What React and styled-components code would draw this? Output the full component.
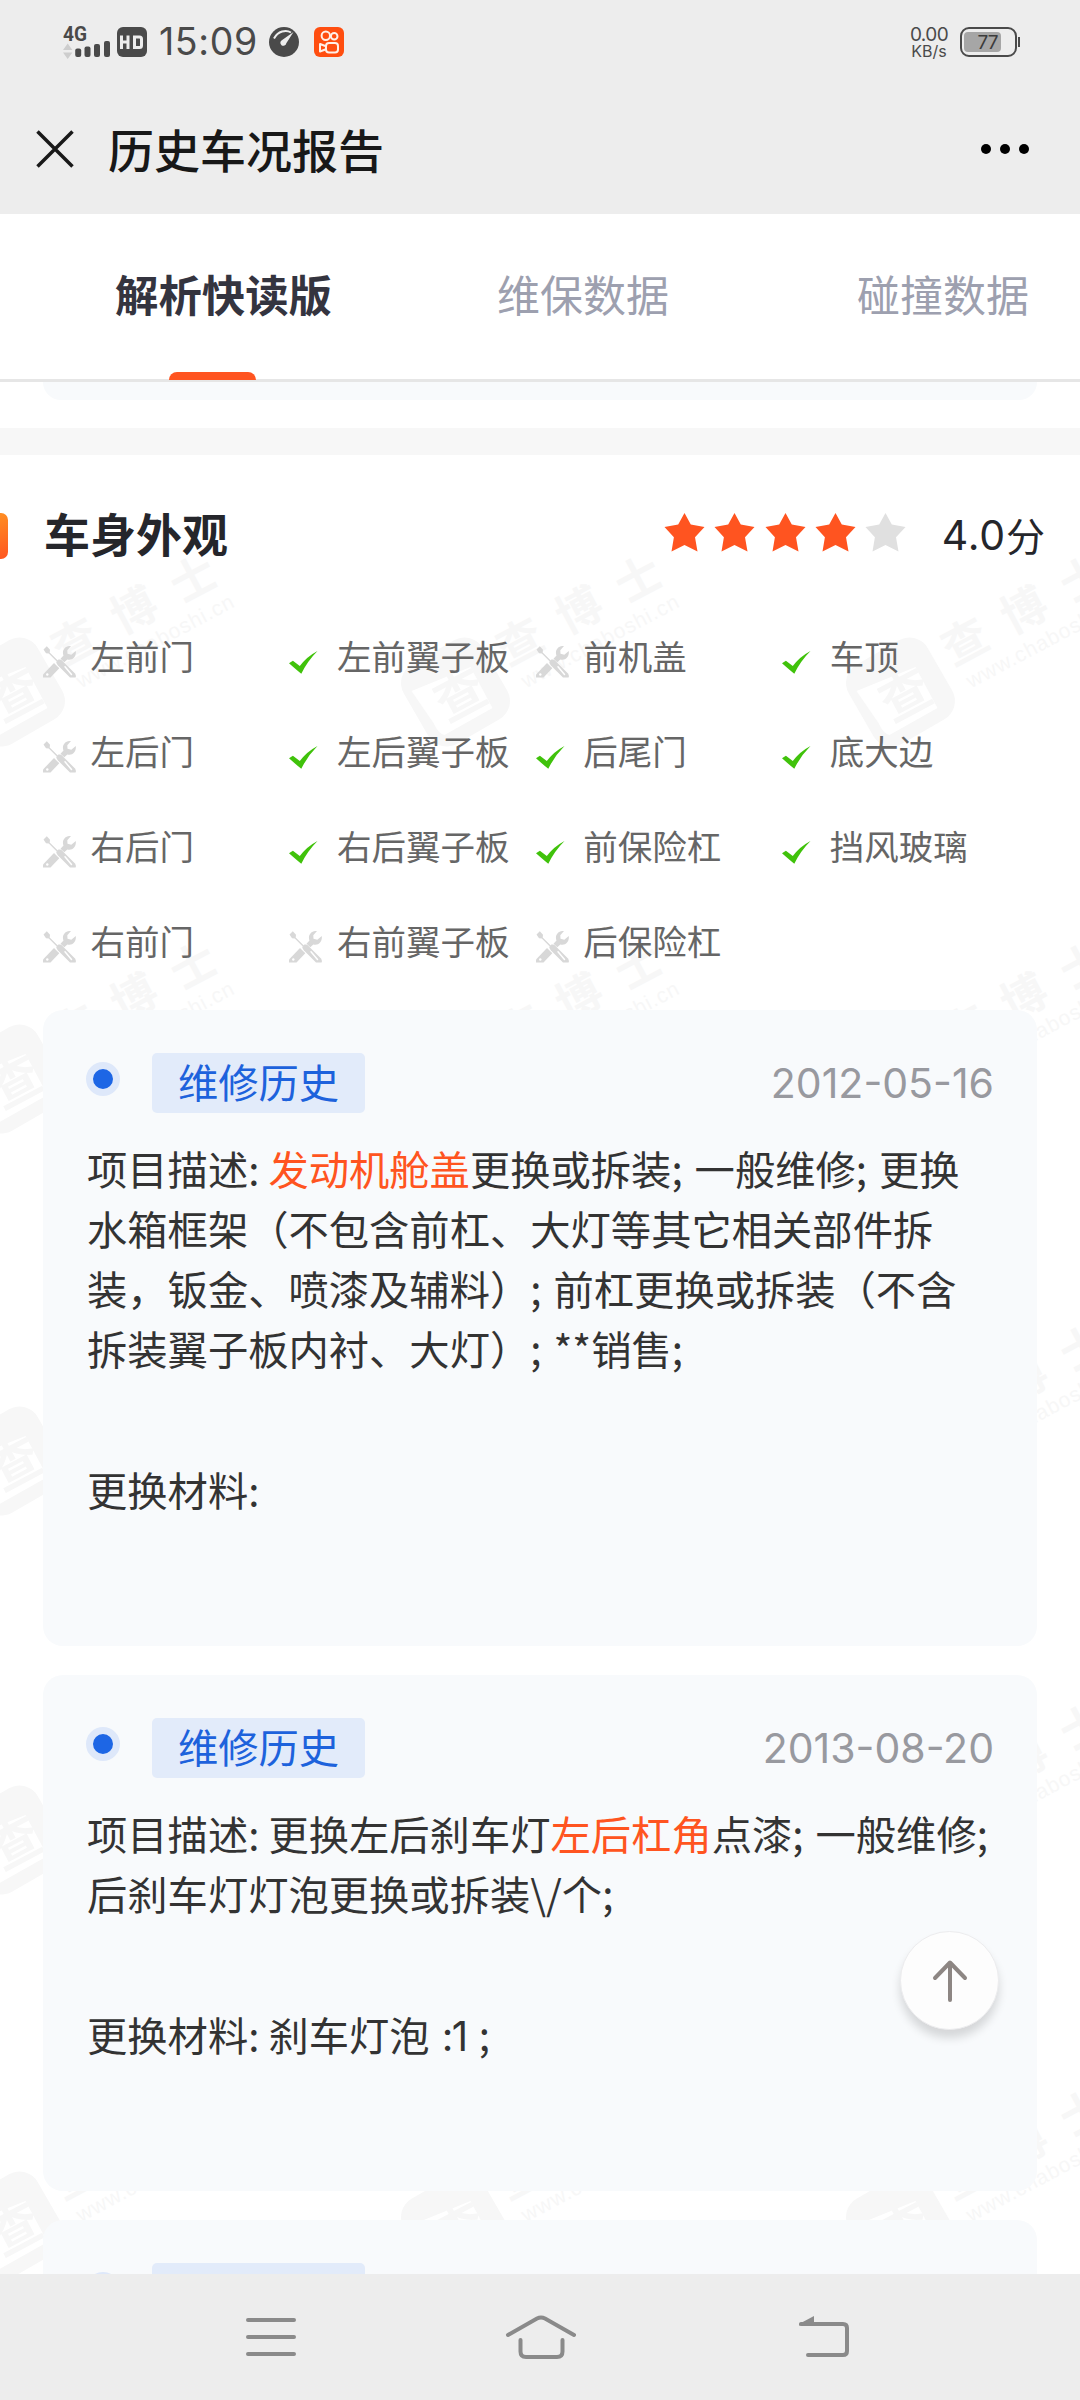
import React from "react";
import styled, { createGlobalStyle } from "styled-components";

const COLORS = {
	bar: "#ededed",
	accent: "#ff5420",
	ink: "#25262b",
	body: "#333333",
	muted: "#9da0af",
	card: "#f8fafc",
	blue: "#1d62dc",
	status: "#4a4a4a",
	nav: "#8a8a8a",
	mark: "#f7f7f7",
};

const CJK = `"Noto Sans CJK SC", sans-serif`;

const PARTS = [
	["左前门", false],
	["左前翼子板", true],
	["前机盖", false],
	["车顶", true],
	["左后门", false],
	["左后翼子板", true],
	["后尾门", true],
	["底大边", true],
	["右后门", false],
	["右后翼子板", true],
	["前保险杠", true],
	["挡风玻璃", true],
	["右前门", false],
	["右前翼子板", false],
	["后保险杠", false],
];

const WATERMARK_ROWS = [237, 624, 1006, 1385, 1771];
const WATERMARK_COLS = [10.5, 455.5, 900.5];

const App = () => {
	return (
		<Screen>
			<GlobalStyle />
			<StatusBar />
			<TitleBar>
				<CloseIcon />
				<Title>历史车况报告</Title>
				<MoreIcon />
			</TitleBar>
			<Tabs>
				<Tab $active>解析快读版</Tab>
				<Tab>维保数据</Tab>
				<Tab>碰撞数据</Tab>
			</Tabs>
			<Content>
				<PreviousCard />
				<Divider />
				<Section>
					<Watermark />
					<SectionBody>
						<SectionHead>
							<Marker />
							<SectionTitle>车身外观</SectionTitle>
							<Stars>
								{[1, 2, 3, 4, 5].map((n) => (
									<Star key={n} filled={n <= 4} />
								))}
							</Stars>
							<Score>
								<Digits>4.0</Digits>分
							</Score>
						</SectionHead>
						<PartGrid>
							{PARTS.map(([name, ok]) => (
								<Part key={name}>
									<PartIcon>{ok ? <CheckIcon /> : <ToolsIcon />}</PartIcon>
									{name}
								</Part>
							))}
						</PartGrid>
						<CardList>
							<HistoryCard date="2012-05-16">
								<Line>
									<Label>项目描述: </Label>
									<Hot>发动机舱盖</Hot>更换或拆装; 一般维修; 更换
								</Line>
								<Line>水箱框架（不包含前杠、大灯等其它相关部件拆</Line>
								<Line>装，钣金、喷漆及辅料）; 前杠更换或拆装（不含</Line>
								<Line>拆装翼子板内衬、大灯）; **销售;</Line>
								<Materials>更换材料:</Materials>
							</HistoryCard>
							<HistoryCard date="2013-08-20">
								<Line>
									<Label>项目描述: </Label>
									更换左后刹车灯<Hot>左后杠角</Hot>点漆; 一般维修;
								</Line>
								<Line>后刹车灯灯泡更换或拆装\/个;</Line>
								<Materials>
									<Label>更换材料: </Label>
									刹车灯泡 <Count>:1</Count> ;
								</Materials>
							</HistoryCard>
							<HistoryCard />
						</CardList>
					</SectionBody>
				</Section>
			</Content>
			<NavBar />
			<TopButton aria-label="返回顶部">
				<svg width="40" height="46" viewBox="0 0 40 46" fill="none">
					<path
						d="M20 42V5M5 20 20 4.500 35 20"
						stroke="#8d8683"
						strokeWidth="4"
						strokeLinecap="round"
						strokeLinejoin="round"
					/>
				</svg>
			</TopButton>
		</Screen>
	);
};

const StatusBar = () => (
	<StatusRow>
		<svg width="48" height="36" viewBox="0 0 48 36" fill={COLORS.status}>
			<text
				x="0"
				y="17"
				fontFamily="Roboto"
				fontWeight="700"
				fontSize="21"
				textLength="24"
				lengthAdjust="spacingAndGlyphs">
				4G
			</text>
			<path d="M0 26 4.700 19.500 9.400 26ZM0 28.500H9.400L4.700 35Z" fill="#cdcdcd" />
			<rect x="12.200" y="24.500" width="6" height="8.500" rx="2" />
			<rect x="21.500" y="22.500" width="6" height="10.500" rx="2" />
			<rect x="31" y="20" width="6" height="13" rx="2" />
			<rect x="41" y="17" width="6" height="16" rx="2" />
		</svg>
		<HdBadge width="30" height="30" viewBox="0 0 30 30">
			<rect width="30" height="30" rx="6" fill={COLORS.status} />
			<path
				d="M4.500 8.500V22M11 8.500V22M4.500 15H11M17.500 10H22.500Q24.500 10 24.500 12V18.500Q24.500 20.500 22.500 20.500H17.500Z"
				fill="none"
				stroke={COLORS.bar}
				strokeWidth="3"
			/>
		</HdBadge>
		<Clock>15:09</Clock>
		<GaugeIcon width="30" height="30" viewBox="0 0 30 30">
			<circle cx="15" cy="15" r="15" fill={COLORS.status} />
			<path d="M5 11.500C9 4 17 2.500 22 5.500" fill="none" stroke={COLORS.bar} strokeWidth="2" />
			<path d="M24.500 5 17.300 16.200A3 3 0 1 1 13.200 13Z" fill={COLORS.bar} />
		</GaugeIcon>
		<svg width="30" height="30" viewBox="0 0 30 30">
			<rect width="30" height="30" rx="6" fill="#ff4e10" />
			<g fill="none" stroke="#fff0e8" strokeWidth="2">
				<circle cx="11.800" cy="8.700" r="4.200" />
				<circle cx="20.200" cy="9.300" r="3.300" />
				<rect x="12" y="16" width="12" height="9.500" rx="3" />
				<path d="M12 19.300 6 17V24.500L12 22.300" strokeLinejoin="round" />
			</g>
		</svg>
		<NetSpeed>
			<SpeedValue>0.00</SpeedValue>
			<SpeedUnit>KB/s</SpeedUnit>
		</NetSpeed>
		<svg width="60" height="30" viewBox="0 0 60 30">
			<rect x="1" y="1" width="55" height="28" rx="8" fill="none" stroke={COLORS.status} strokeWidth="2" />
			<rect x="4" y="5" width="37" height="20" rx="4" fill="#a6a6a6" />
			<rect x="58" y="10" width="2" height="10" fill={COLORS.status} />
			<text x="17.500" y="22" fontFamily="Inter" fontSize="19" textLength="21" fill="#3c3c3c">
				77
			</text>
		</svg>
	</StatusRow>
);

const CloseIcon = () => (
	<svg width="38" height="38" viewBox="0 0 38 38">
		<path d="M1.500 1.500 36.500 36.500M36.500 1.500 1.500 36.500" stroke="#191919" strokeWidth="3.500" />
	</svg>
);

const MoreIcon = () => (
	<svg width="48" height="10" viewBox="0 0 48 10">
		<circle cx="5" cy="5" r="5" />
		<circle cx="24" cy="5" r="5" />
		<circle cx="43" cy="5" r="5" />
	</svg>
);

const Star = ({ filled }) => (
	<svg width="41" height="39" viewBox="0 0 41 39">
		<path
			d="M20.500 0 26.800 11.500 40.500 14 31 24.200 33.500 38.500 20.500 32 7.500 38.500 9.900 24.200 .5 14 14.200 11.500Z"
			fill={filled ? COLORS.accent : "#e0e0e0"}
		/>
	</svg>
);

const CheckIcon = () => (
	<svg width="29" height="23" viewBox="0 0 29 23">
		<path d="M0 12.300 3.900 9.700 10.800 15Q18 5.500 28.500 0 18.500 10 12.300 22.800 7.500 19 0 12.300Z" fill="#40c20b" />
	</svg>
);

const ToolsIcon = () => (
	<svg width="33" height="32" viewBox="0 0 33 32" fill="#d8d8d8">
		<path d="M.5 3.500 3.800.3 7 3.800 6.700 6.500 14.500 14.200 13.500 15.200 5.800 7.600 3 7.300Z" />
		<path d="M13.500 15.500C14.500 13 17.500 13 19.500 15L32 27.500Q33.500 30 32.500 31.500H27L15 19.500Q13 17.500 13.500 15.500Z" />
		<path d="M22 20.800 28.500 28.500" stroke="#fff" strokeWidth="1.500" strokeLinecap="round" />
		<path d="M28 0C22 -.5 18.500 4.500 20.500 9.500L17.500 12.800 21.300 16.300 24.300 13.400C29.500 15 33.500 10.500 32.800 5L28.300 8.800 24.500 7.800 24.300 4.200Z" />
		<path d="M11 17 16.300 22.200 7.500 31.500H0V28.500Z" />
		<circle cx="4.300" cy="28.500" r="1.200" fill="#fff" />
	</svg>
);

const WatermarkStamp = ({ x, y }) => (
	<g transform={`translate(${x} ${y})`} fill={COLORS.mark}>
		<rect x="-45.500" y="-45.500" width="91" height="91" rx="21" transform="rotate(-30)" />
		<path d="M-44 -1 15 -25 37 16 -11 43Q-17 42 -22 31Z" fill="#fff" />
		<g transform="rotate(-28)" fontFamily="Noto Sans CJK SC" fontWeight="700">
			<text x="-22" y="23" fontSize="50">
				查
			</text>
			<text x="58" y="2" fontSize="45" letterSpacing="22">
				查博士
			</text>
			<text
				x="64"
				y="30"
				fontSize="21"
				fontFamily="Liberation Sans"
				fontWeight="400"
				textLength="175">
				www.chaboshi.cn
			</text>
		</g>
	</g>
);

const Watermark = () => (
	<WatermarkLayer width="1080" height="1819" viewBox="0 0 1080 1819" aria-hidden="true">
		{WATERMARK_ROWS.map((y) =>
			WATERMARK_COLS.map((x) => <WatermarkStamp key={`${x}-${y}`} x={x} y={y} />)
		)}
	</WatermarkLayer>
);

const HistoryCard = ({ date, children }) => (
	<Card>
		<CardHead>
			<Dot />
			<Tag>维修历史</Tag>
			<CardDate>{date}</CardDate>
		</CardHead>
		{children}
	</Card>
);

const NavBar = () => (
	<Nav>
		<svg width="50" height="42" viewBox="0 0 50 42">
			<path d="M2 4H48M2 21H48M2 38H48" />
		</svg>
		<HomeIcon width="71" height="44" viewBox="0 0 71 44">
			<path d="M3 20 32 3.500Q36 1.500 40 3.500L69 20M15.500 25V36.500Q15.500 42 21 42H52Q57.500 42 57.500 36.500V25" />
		</HomeIcon>
		<svg width="52" height="42" viewBox="0 0 52 42">
			<path d="M3 8H45Q49 8 49 12V35Q49 39 45 39H10" />
			<BackTip d="M1 9.500V8L16 0V8Z" />
		</svg>
	</Nav>
);

const GlobalStyle = createGlobalStyle`
	* {
		box-sizing: border-box;
	}

	body {
		margin: 0;
		background-color: #fff;
		font-family: ${CJK};
	}

	svg {
		display: block;
		flex-shrink: 0;
	}
`;

const Screen = styled.div`
	position: relative;
	display: flex;
	flex-direction: column;
	width: 1080px;
	height: 2400px;
	overflow: hidden;
	background-color: #fff;
`;

const StatusRow = styled.div`
	display: flex;
	align-items: center;
	height: 84px;
	padding: 0 60px 0 63px;
	background-color: ${COLORS.bar};
`;

const HdBadge = styled.svg`
	margin-left: 6px;
`;

const Clock = styled.span`
	width: 108px;
	margin-left: 12px;
	font-family: Inter, sans-serif;
	font-size: 37.500px;
	line-height: 40px;
	letter-spacing: 0.6px;
	color: ${COLORS.status};
`;

const GaugeIcon = styled.svg`
	margin-left: 2px;
	margin-right: 15px;
`;

const NetSpeed = styled.div`
	width: 40px;
	margin-left: auto;
	margin-right: 11px;
	font-family: Inter, sans-serif;
	text-align: center;
	white-space: nowrap;
	color: ${COLORS.status};
`;

const SpeedValue = styled.div`
	font-size: 19px;
	line-height: 17px;
	letter-spacing: -0.6px;
`;

const SpeedUnit = styled.div`
	font-size: 16px;
	line-height: 16px;
`;

const TitleBar = styled.header`
	display: flex;
	align-items: center;
	height: 130px;
	padding: 0 51px 0 36px;
	background-color: ${COLORS.bar};

	& > svg:last-child {
		margin-left: auto;
	}
`;

const Title = styled.h1`
	margin: -3px 0 0 34px;
	font-size: 46px;
	line-height: 60px;
	font-weight: 500;
	color: #181818;
`;

const Tabs = styled.nav`
	display: grid;
	grid-template-columns: 382px 360px auto;
	height: 168px;
	padding-left: 115px;
	border-bottom: 3px solid #e6e6e6;
	white-space: nowrap;
`;

const Tab = styled.div`
	position: relative;
	font-size: ${(props) => (props.$active ? "43.400px" : "43px")};
	line-height: 158px;
	font-weight: ${(props) => (props.$active ? "700" : "400")};
	color: ${(props) => (props.$active ? "#34343f" : COLORS.muted)};

	&::after {
		content: "";
		display: ${(props) => (props.$active ? "block" : "none")};
		position: absolute;
		left: 54px;
		bottom: -1px;
		width: 87px;
		height: 8px;
		border-radius: 8px 8px 0 0;
		background-color: ${COLORS.accent};
	}
`;

const Content = styled.main`
	flex: 1;
	min-height: 0;
	overflow: hidden;
`;

const PreviousCard = styled.div`
	height: 18px;
	margin: 0 43px 28px;
	border-radius: 0 0 20px 20px;
	background-color: ${COLORS.card};
`;

const Divider = styled.div`
	height: 27px;
	background-color: #f7f7f7;
`;

const Section = styled.section`
	position: relative;
`;

const WatermarkLayer = styled.svg`
	position: absolute;
	top: 0;
	left: 0;
`;

const SectionBody = styled.div`
	position: relative;
`;

const SectionHead = styled.div`
	display: flex;
	align-items: center;
	height: 154px;
	padding: 6px 35px 0 0;
`;

const Marker = styled.div`
	width: 8px;
	height: 46px;
	margin-top: 2px;
	border-radius: 0 7px 7px 0;
	background: linear-gradient(160deg, #ff8e22, #ff5520);
`;

const SectionTitle = styled.h2`
	margin: -6px auto 0 36px;
	font-size: 46px;
	line-height: 60px;
	font-weight: 700;
	color: ${COLORS.ink};
`;

const Stars = styled.div`
	display: flex;
	gap: 9.200px;
	margin-top: -5px;
`;

const Score = styled.div`
	display: flex;
	align-items: center;
	justify-content: flex-end;
	width: 139px;
	margin-top: -3px;
	font-size: 39px;
	line-height: 50px;
	color: ${COLORS.ink};
`;

const Digits = styled.span`
	padding-top: 3px;
	font-family: Inter, sans-serif;
	font-size: 41px;
	letter-spacing: 0.8px;
`;

const PartGrid = styled.div`
	display: grid;
	grid-template-columns: repeat(4, 246.400px);
	grid-auto-rows: 95px;
	padding-left: 43px;
`;

const Part = styled.div`
	display: flex;
	align-items: center;
	padding-bottom: 4px;
	font-size: 34.500px;
	white-space: nowrap;
	color: #666;
`;

const PartIcon = styled.span`
	width: 47.500px;
	padding-top: 15px;
`;

const CardList = styled.div`
	display: flex;
	flex-direction: column;
	gap: 29px;
	margin: 21px 43px 0;
`;

const Card = styled.article`
	padding: 43px 43px 127px 44px;
	border-radius: 20px;
	background-color: ${COLORS.card};
	color: ${COLORS.body};
`;

const CardHead = styled.div`
	display: flex;
	align-items: center;
	height: 60px;
	margin-bottom: 25px;
`;

const Dot = styled.div`
	width: 34px;
	height: 34px;
	margin: -8px 32px 0 -1px;
	border: 7px solid #dee8fa;
	border-radius: 50%;
	background-color: #1d66e5;
`;

const Tag = styled.div`
	width: 213px;
	height: 60px;
	border-radius: 5px;
	background-color: #e2ebfa;
	font-size: 40.300px;
	line-height: 56px;
	text-align: center;
	color: ${COLORS.blue};
`;

const CardDate = styled.time`
	margin-left: auto;
	font-family: Inter, sans-serif;
	font-size: 41px;
	letter-spacing: 0;
	color: #98999f;
`;

const Line = styled.p`
	margin: 0;
	font-size: 40.300px;
	line-height: 60px;
	word-spacing: 3px;
	white-space: nowrap;
`;

const Label = styled.span`
	word-spacing: 0;
`;

const Hot = styled.span`
	color: ${COLORS.accent};
`;

const Count = styled.span`
	font-family: Inter, sans-serif;
	line-height: 1;
	letter-spacing: -1.500px;
`;

const Materials = styled(Line)`
	margin-top: 81px;
`;

const TopButton = styled.button`
	position: absolute;
	left: 900px;
	top: 1931px;
	display: flex;
	align-items: center;
	justify-content: center;
	width: 99px;
	height: 99px;
	padding: 0;
	border: 1px solid #ececee;
	border-radius: 50%;
	background-color: #fdfdfd;
	box-shadow: 0 8px 10px rgba(0, 0, 0, 0.14);
`;

const Nav = styled.footer`
	display: flex;
	align-items: center;
	height: 126px;
	padding-left: 246px;
	background-color: ${COLORS.bar};

	path {
		fill: none;
		stroke: ${COLORS.nav};
		stroke-width: 4;
		stroke-linecap: round;
	}
`;

const HomeIcon = styled.svg`
	margin: 0 222px 0 209px;
`;

const BackTip = styled.path`
	&& {
		fill: ${COLORS.nav};
		stroke: none;
	}
`;

export default App;
